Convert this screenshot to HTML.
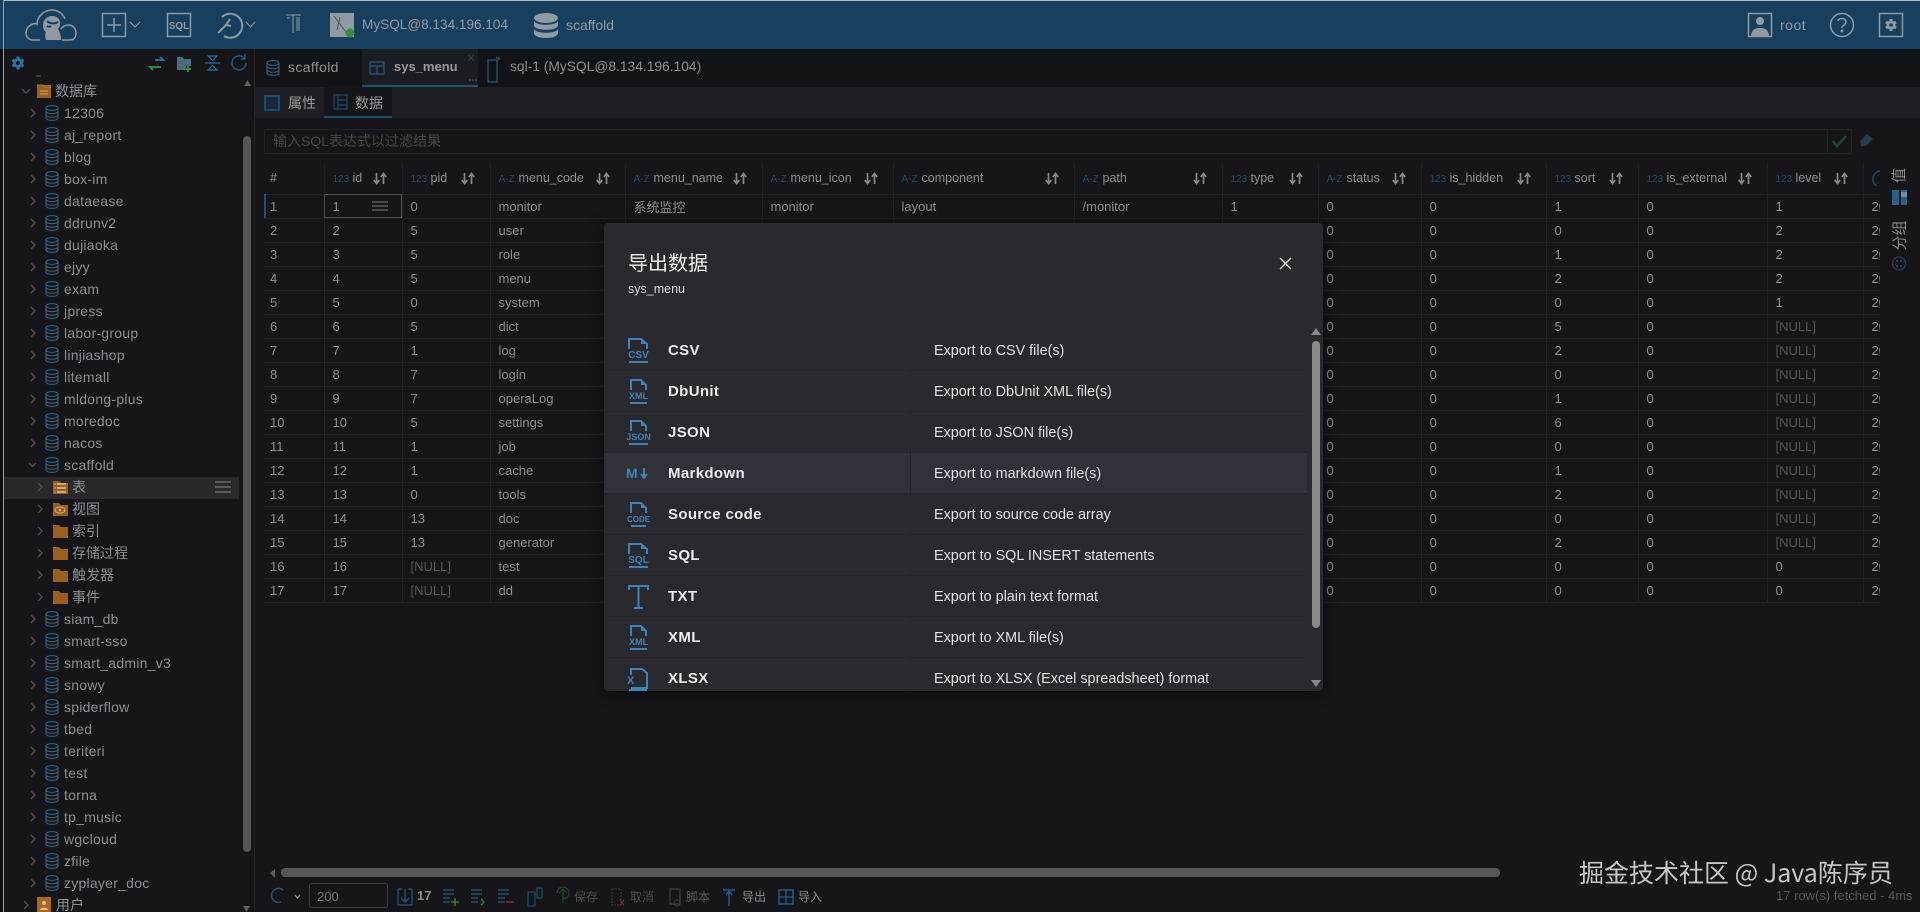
<!DOCTYPE html>
<html lang="zh"><head><meta charset="utf-8"><title>CloudBeaver</title>
<style>
html,body{margin:0;padding:0;background:#15151a;width:1920px;height:912px;overflow:hidden}
body{font-family:"Liberation Sans","Noto Sans CJK SC",sans-serif;position:relative;color:#8a8a8a}
.a{position:absolute}
.t{position:absolute;white-space:nowrap;line-height:20px;font-size:13px}
.s{position:absolute;white-space:nowrap;line-height:20px;font-size:14px;color:#8a8e92;letter-spacing:.25px;left:64px}
.c{left:72px;font-size:14px;letter-spacing:0}
table{position:absolute;left:264px;top:163px;width:1616px;border-collapse:collapse;table-layout:fixed;font-size:13px;color:#8c8c8c}
td,th{padding:0 0 0 8px;height:24px;box-sizing:border-box;border-bottom:1px solid #212226;border-right:1px solid #212226;white-space:nowrap;overflow:hidden;font-weight:normal;text-align:left;position:relative}
th{height:31px;border-right:1px solid #1e1f23;color:#8e8e8e;font-size:12.5px}
th i{font-style:normal;font-size:10px;color:#1f4a68;display:inline-block;width:20px;letter-spacing:0}
th svg{position:absolute;right:15px;top:9px}
.n{color:#555}
.h{padding-left:6px}
.mr{position:absolute;left:0;width:703px;height:41px;box-sizing:border-box;border-bottom:1px solid #25252b}
.mr b{position:absolute;left:64px;top:10px;font-size:15px;line-height:22px;color:#ececec;letter-spacing:.35px}
.mr span{position:absolute;left:330px;top:11px;font-size:14.4px;line-height:20px;color:#e2e2e2}
.mr svg{position:absolute;left:22px;top:7px}
</style></head><body>

<div class="a" style="left:0;top:0;width:1920px;height:49px;background:#18405e"></div>
<div class="a" style="left:3px;top:0;width:1917px;height:1px;background:#a9b8c2"></div>
<div class="a" style="left:3px;top:0;width:1px;height:912px;background:#9aa2a8"></div>
<div class="a" style="left:0;top:49px;width:3px;height:863px;background:#0e0f12"></div>

<div class="t" style="left:362px;top:15px;font-size:13.6px;color:#8f9aa3">MySQL@8.134.196.104</div>
<div class="t" style="left:566px;top:15px;font-size:14px;color:#8f9aa3">scaffold</div>
<div class="t" style="left:1780px;top:15px;font-size:14px;color:#8f9aa3;letter-spacing:.5px">root</div>

<div class="a" style="left:255px;top:49px;width:1665px;height:38px;background:#121317"></div>
<div class="a" style="left:362px;top:49px;width:116px;height:38px;background:#1b1d22;box-sizing:border-box;border-bottom:2px solid #23506f"></div>
<div class="t" style="left:288px;top:57px;font-size:14px;color:#8a8e92;letter-spacing:.35px">scaffold</div>
<div class="t" style="left:394px;top:57px;font-size:13px;font-weight:bold;color:#999">sys_menu</div>
<div class="t" style="left:510px;top:57px;font-size:13.8px;color:#8a8e92">sql-1 (MySQL@8.134.196.104)</div>
<div class="t" style="left:466px;top:48px;font-size:12px;color:#3a3a3c">✕</div>

<div class="a" style="left:255px;top:87px;width:1665px;height:31px;background:#1d1f24"></div>
<div class="a" style="left:324px;top:87px;width:68px;height:31px;background:#15151a;box-sizing:border-box;border-bottom:2px solid #23506f"></div>
<div class="t" style="left:288px;top:93px;font-size:14px;color:#9a9a9a">属性</div>
<div class="t" style="left:355px;top:93px;font-size:14px;color:#9a9a9a">数据</div>

<div class="a" style="left:264px;top:129px;width:1588px;height:25px;box-sizing:border-box;border:1px solid #212226;background:#15151a"></div>
<div class="a" style="left:1827px;top:130px;width:1px;height:23px;background:#212226"></div>
<div class="t" style="left:273px;top:131px;font-size:14px;color:#454648">输入SQL表达式以过滤结果</div>

<div class="a" style="left:254px;top:49px;width:1px;height:863px;background:#24252a"></div>

<table>
<colgroup><col style="width:60px"><col style="width:78px"><col style="width:88px"><col style="width:135px"><col style="width:137px"><col style="width:131px"><col style="width:181px"><col style="width:148px"><col style="width:96px"><col style="width:103px"><col style="width:125px"><col style="width:92px"><col style="width:129px"><col style="width:96px"><col style="width:17px"></colgroup>
<tr>
<th class="h">#</th>
<th><i>123</i>id<svg width="14" height="13"><use href="#sort"/></svg></th>
<th><i>123</i>pid<svg width="14" height="13"><use href="#sort"/></svg></th>
<th><i>A-Z</i>menu_code<svg width="14" height="13"><use href="#sort"/></svg></th>
<th><i>A-Z</i>menu_name<svg width="14" height="13"><use href="#sort"/></svg></th>
<th><i>A-Z</i>menu_icon<svg width="14" height="13"><use href="#sort"/></svg></th>
<th><i>A-Z</i>component<svg width="14" height="13"><use href="#sort"/></svg></th>
<th><i>A-Z</i>path<svg width="14" height="13"><use href="#sort"/></svg></th>
<th><i>123</i>type<svg width="14" height="13"><use href="#sort"/></svg></th>
<th><i>A-Z</i>status<svg width="14" height="13"><use href="#sort"/></svg></th>
<th><i>123</i>is_hidden<svg width="14" height="13"><use href="#sort"/></svg></th>
<th><i>123</i>sort<svg width="14" height="13"><use href="#sort"/></svg></th>
<th><i>123</i>is_external<svg width="14" height="13"><use href="#sort"/></svg></th>
<th><i>123</i>level<svg width="14" height="13"><use href="#sort"/></svg></th>
<th></th>
</tr>
<tr><td class="h">1</td><td>1</td><td>0</td><td>monitor</td><td>系统监控</td><td>monitor</td><td>layout</td><td>/monitor</td><td>1</td><td>0</td><td>0</td><td>1</td><td>0</td><td>1</td><td>20</td></tr>
<tr><td class="h">2</td><td>2</td><td>5</td><td>user</td><td></td><td></td><td></td><td></td><td></td><td>0</td><td>0</td><td>0</td><td>0</td><td>2</td><td>20</td></tr>
<tr><td class="h">3</td><td>3</td><td>5</td><td>role</td><td></td><td></td><td></td><td></td><td></td><td>0</td><td>0</td><td>1</td><td>0</td><td>2</td><td>20</td></tr>
<tr><td class="h">4</td><td>4</td><td>5</td><td>menu</td><td></td><td></td><td></td><td></td><td></td><td>0</td><td>0</td><td>2</td><td>0</td><td>2</td><td>20</td></tr>
<tr><td class="h">5</td><td>5</td><td>0</td><td>system</td><td></td><td></td><td></td><td></td><td></td><td>0</td><td>0</td><td>0</td><td>0</td><td>1</td><td>20</td></tr>
<tr><td class="h">6</td><td>6</td><td>5</td><td>dict</td><td></td><td></td><td></td><td></td><td></td><td>0</td><td>0</td><td>5</td><td>0</td><td class="n">[NULL]</td><td>20</td></tr>
<tr><td class="h">7</td><td>7</td><td>1</td><td>log</td><td></td><td></td><td></td><td></td><td></td><td>0</td><td>0</td><td>2</td><td>0</td><td class="n">[NULL]</td><td>20</td></tr>
<tr><td class="h">8</td><td>8</td><td>7</td><td>login</td><td></td><td></td><td></td><td></td><td></td><td>0</td><td>0</td><td>0</td><td>0</td><td class="n">[NULL]</td><td>20</td></tr>
<tr><td class="h">9</td><td>9</td><td>7</td><td>operaLog</td><td></td><td></td><td></td><td></td><td></td><td>0</td><td>0</td><td>1</td><td>0</td><td class="n">[NULL]</td><td>20</td></tr>
<tr><td class="h">10</td><td>10</td><td>5</td><td>settings</td><td></td><td></td><td></td><td></td><td></td><td>0</td><td>0</td><td>6</td><td>0</td><td class="n">[NULL]</td><td>20</td></tr>
<tr><td class="h">11</td><td>11</td><td>1</td><td>job</td><td></td><td></td><td></td><td></td><td></td><td>0</td><td>0</td><td>0</td><td>0</td><td class="n">[NULL]</td><td>20</td></tr>
<tr><td class="h">12</td><td>12</td><td>1</td><td>cache</td><td></td><td></td><td></td><td></td><td></td><td>0</td><td>0</td><td>1</td><td>0</td><td class="n">[NULL]</td><td>20</td></tr>
<tr><td class="h">13</td><td>13</td><td>0</td><td>tools</td><td></td><td></td><td></td><td></td><td></td><td>0</td><td>0</td><td>2</td><td>0</td><td class="n">[NULL]</td><td>20</td></tr>
<tr><td class="h">14</td><td>14</td><td>13</td><td>doc</td><td></td><td></td><td></td><td></td><td></td><td>0</td><td>0</td><td>0</td><td>0</td><td class="n">[NULL]</td><td>20</td></tr>
<tr><td class="h">15</td><td>15</td><td>13</td><td>generator</td><td></td><td></td><td></td><td></td><td></td><td>0</td><td>0</td><td>2</td><td>0</td><td class="n">[NULL]</td><td>20</td></tr>
<tr><td class="h">16</td><td>16</td><td class="n">[NULL]</td><td>test</td><td></td><td></td><td></td><td></td><td></td><td>0</td><td>0</td><td>0</td><td>0</td><td>0</td><td>20</td></tr>
<tr><td class="h">17</td><td>17</td><td class="n">[NULL]</td><td>dd</td><td></td><td></td><td></td><td></td><td></td><td>0</td><td>0</td><td>0</td><td>0</td><td>0</td><td>20</td></tr>
</table>
<div class="a" style="left:324px;top:194px;width:78px;height:24px;box-sizing:border-box;border:1px solid #4c4d50"></div>
<div class="a" style="left:264px;top:194px;width:2px;height:24px;background:#23506f"></div>
<div class="a" style="left:1880px;top:49px;width:40px;height:863px;background:#15151a"></div>
<div class="a" style="left:1880px;top:49px;width:40px;height:38px;background:#121317"></div>
<div class="a" style="left:1880px;top:87px;width:40px;height:31px;background:#1d1f24"></div>
<div class="a" style="left:1891px;top:167px;width:17px;height:17px;line-height:17px;font-size:15px;color:#8a8a8a;transform:rotate(-90deg);text-align:center">值</div>
<div class="a" style="left:1885px;top:227px;width:30px;height:17px;line-height:17px;font-size:15px;color:#8a8a8a;transform:rotate(-90deg);white-space:nowrap;text-align:center">分组</div>

<!-- sidebar -->
<div class="a" style="left:4px;top:477px;width:235px;height:22px;background:#29292d"></div>
<div class="s" style="left:55px;top:81px;letter-spacing:0">数据库</div>
<div class="s" style="top:103px">12306</div>
<div class="s" style="top:125px">aj_report</div>
<div class="s" style="top:147px">blog</div>
<div class="s" style="top:169px">box-im</div>
<div class="s" style="top:191px">dataease</div>
<div class="s" style="top:213px">ddrunv2</div>
<div class="s" style="top:235px">dujiaoka</div>
<div class="s" style="top:257px">ejyy</div>
<div class="s" style="top:279px">exam</div>
<div class="s" style="top:301px">jpress</div>
<div class="s" style="top:323px">labor-group</div>
<div class="s" style="top:345px">linjiashop</div>
<div class="s" style="top:367px">litemall</div>
<div class="s" style="top:389px">mldong-plus</div>
<div class="s" style="top:411px">moredoc</div>
<div class="s" style="top:433px">nacos</div>
<div class="s" style="top:455px">scaffold</div>
<div class="s c" style="top:477px">表</div>
<div class="s c" style="top:499px">视图</div>
<div class="s c" style="top:521px">索引</div>
<div class="s c" style="top:543px">存储过程</div>
<div class="s c" style="top:565px">触发器</div>
<div class="s c" style="top:587px">事件</div>
<div class="s" style="top:609px">siam_db</div>
<div class="s" style="top:631px">smart-sso</div>
<div class="s" style="top:653px">smart_admin_v3</div>
<div class="s" style="top:675px">snowy</div>
<div class="s" style="top:697px">spiderflow</div>
<div class="s" style="top:719px">tbed</div>
<div class="s" style="top:741px">teriteri</div>
<div class="s" style="top:763px">test</div>
<div class="s" style="top:785px">torna</div>
<div class="s" style="top:807px">tp_music</div>
<div class="s" style="top:829px">wgcloud</div>
<div class="s" style="top:851px">zfile</div>
<div class="s" style="top:873px">zyplayer_doc</div>
<div class="s" style="left:56px;top:895px;letter-spacing:0">用户</div>
<div class="a" style="left:243px;top:136px;width:8px;height:716px;border-radius:4px;background:#565659"></div>
<div class="a" style="left:281px;top:868px;width:1219px;height:9px;border-radius:4px;background:#565659"></div>

<!-- bottom toolbar -->
<div class="a" style="left:309px;top:883px;width:79px;height:25px;box-sizing:border-box;border:1px solid #3a3a3c;border-radius:3px"></div>
<div class="t" style="left:317px;top:887px;font-size:13px;color:#777">200</div>
<div class="t" style="left:417px;top:886px;font-size:13px;color:#888;font-weight:bold">17</div>
<div class="t" style="left:574px;top:887px;font-size:12px;color:#4d4d4d">保存</div>
<div class="t" style="left:630px;top:887px;font-size:12px;color:#4d4d4d">取消</div>
<div class="t" style="left:686px;top:887px;font-size:12px;color:#5a5a5a">脚本</div>
<div class="t" style="left:742px;top:887px;font-size:12px;color:#8a8a8a">导出</div>
<div class="t" style="left:798px;top:887px;font-size:12px;color:#8a8a8a">导入</div>
<div class="t" style="left:1579px;top:856px;font-family:'Noto Sans CJK SC','Liberation Sans',sans-serif;font-size:25px;line-height:32px;color:#c6c6c6">掘金技术社区 @ Java陈序员</div>
<div class="t" style="left:1776px;top:886px;font-size:13px;color:#565656">17 row(s) fetched - 4ms</div>

<svg class="a" style="left:0;top:0" width="1920" height="912" viewBox="0 0 1920 912" fill="none">
<defs>
<symbol id="sort" viewBox="0 0 14 13" width="14" height="13"><path d="M3.5 1v10M.8 8l2.7 3.5L6.2 8M10.500 12V2M7.800 5l2.700-3.500L13.200 5" stroke="#8a8a8a" stroke-width="1.700"/></symbol>
<symbol id="db" viewBox="0 0 14 16" width="14" height="16"><ellipse cx="7" cy="3" rx="6" ry="2.400" stroke="#29587c" stroke-width="1.300"/><path d="M1 3v10c0 1.300 2.700 2.400 6 2.400s6-1.100 6-2.400V3" stroke="#29587c" stroke-width="1.300"/><path d="M1 6.300c0 1.300 2.700 2.400 6 2.400s6-1.100 6-2.400M1 9.800c0 1.300 2.700 2.400 6 2.400s6-1.100 6-2.400" stroke="#4a5a66" stroke-width="1.100"/></symbol>
<symbol id="ch" viewBox="0 0 8 10" width="8" height="10"><path d="M2 1l4 4-4 4" stroke="#4e4e4e" stroke-width="1.400"/></symbol>
<symbol id="fo" viewBox="0 0 15 14" width="15" height="14"><path d="M0 1h6l2 2h7v11H0z" fill="#9c5e1d"/></symbol>
</defs>

<!-- top toolbar icons -->
<g stroke="#8f9aa3" stroke-width="1.500">
<path d="M40 40H33c-4 0-7-3-7-7s3-8 7-9c3-1 4 0 4 0 0-8 8-14 15-14 6 0 11 4 13 9M62 40h8c4 0 6-3 6-7 0-4-3-8-8-8-3 0-6 2-7 4"/>
<path d="M46 40c-1-3-1-6 0-8-2-1-3-4-3-7 0-5 4-9 9-9 5 0 8 3 8 7 0 3-1 5-2 6 2 3 3 7 3 11z" fill="#8f9aa3" stroke="none"/>
<path d="M47 21c3 3 8 3 11 1M47 26c1 1 3 1 4 0" stroke="#18405e" stroke-width="2"/>
<rect x="102.500" y="13.500" width="23" height="23"/><path d="M114 18v14M107 25h14"/>
<path d="M130 22l5 5 5-5" stroke-width="1"/>
<rect x="167.500" y="13.500" width="23" height="23"/>
<path d="M246 22l4.500 5 4.500-5" stroke-width="1"/>
<path d="M222 17a12 12 0 1 1 2 19M230 19l-4 6-8 8M231 26l-5-1" stroke-width="2"/>
<path d="M286 15h15M293 15v18M290 18h-3M297 17v14M299 17v14" stroke-width="1"/>
<rect x="1748.500" y="13.500" width="23" height="23"/><circle cx="1760" cy="21" r="4" fill="#8f9aa3" stroke="none"/><path d="M1751 36c0-6 4-8 9-8s9 2 9 8z" fill="#8f9aa3" stroke="none"/>
<circle cx="1842" cy="25" r="11.500"/><path d="M1838 21c0-3 8-4 8 1 0 3-4 3-4 6"/><circle cx="1842" cy="31" r=".7"/>
<rect x="1879.500" y="13.500" width="23" height="23"/>
<path d="M1891 19v12M1886 22l10 6M1896 22l-10 6" stroke-width="3"/>
<circle cx="1891" cy="25" r="4.500" fill="#8f9aa3" stroke="none"/><circle cx="1891" cy="25" r="1.800" fill="#18405e" stroke="none"/>
</g>
<text x="179" y="29" text-anchor="middle" font-family="Liberation Sans" font-size="10" font-weight="bold" fill="#8f9aa3">SQL</text>
<rect x="330" y="13" width="24" height="24" fill="#8f9aa3"/><path d="M334 16l12 16M340 17l-3 13" stroke="#4a5560"/>
<circle cx="350" cy="33" r="4.500" fill="#3c8a40"/>
<g fill="#8f9aa3"><ellipse cx="546" cy="18" rx="12" ry="5"/><path d="M534 21c2 5 22 5 24 0v5c-2 5-22 5-24 0zM534 29c2 5 22 5 24 0v4c0 3-5 5-12 5s-12-2-12-5z"/></g>

<!-- sidebar toolbar -->
<path d="M18 56.500v13M12.400 59.800l11.200 6.400M23.600 59.800l-11.200 6.400" stroke="#2b6f9f" stroke-width="3"/>
<circle cx="18" cy="63" r="5" fill="#2b6f9f"/><circle cx="18" cy="63" r="2" fill="#15151a"/>
<path d="M155 60h8l-3-3" stroke="#2b6f9f" stroke-width="2"/><path d="M161 67h-11l3 3" stroke="#2f8a3a" stroke-width="2"/>
<path d="M177 57h5l2 2h7v7h-5v4h-9z" fill="#4a6a80"/><path d="M188 66v6M185 69h6" stroke="#2f8a3a" stroke-width="2"/>
<path d="M205 63h15M208 56h9l-4.500 4.500zM208 70h9l-4.500-4.500z" stroke="#2b6f9f" stroke-width="1.200"/>
<path d="M246 63a7 7 0 1 1-2-5M245 54v5h-4" stroke="#1f5a85" stroke-width="1.500"/>
<path d="M36 76h5" stroke="#666"/>
<path d="M244 86l3.500-6 3.500 6z" fill="#5f5f5f"/>

<!-- tab icons -->
<use href="#db" x="266" y="60"/>
<path d="M370 62h14v12h-14zM370 66h14M377 66v8" stroke="#24506f" stroke-width="1.400"/>
<path d="M488 60h9v22h-9z" stroke="#24506f" stroke-width="1.400"/><path d="M496 58h3v2" stroke="#555"/>
<path d="M470 80h.01M473 80h.01M476 80h.01" stroke="#666" stroke-width="1.500" stroke-linecap="round"/>
<rect x="265" y="96" width="14" height="14" fill="#1a2a38" stroke="#1f4a68" stroke-width="2"/>
<path d="M334 95h13v14h-13zM338 95v14M338 100h9M338 105h9" stroke="#1f4a68" stroke-width="1.200"/>
<path d="M1833 141l4 5 9-10" stroke="#22442e" stroke-width="2.500"/>
<path d="M1860 141l7-7 6 5-7 7h-5z" fill="#223c50"/>

<!-- cell hamburger -->
<path d="M372 202h16M372 206h16M372 210h16" stroke="#5c5c5c" stroke-width="1.600"/>
<path d="M215 482h16M215 487h16M215 492h16" stroke="#6a6a6a" stroke-width="1.600"/>
<!-- rail -->
<rect x="1892" y="190" width="15" height="15" fill="#2b5f85"/><rect x="1899" y="190" width="2" height="15" fill="#15151a"/><rect x="1901" y="192" width="6" height="5" fill="#6f8ea5"/>
<circle cx="1899" cy="263.500" r="6.500" stroke="#2a3a48" stroke-width="1.500"/><path d="M1897 261h.01M1901 261h.01M1897 266h.01M1901 266h.01" stroke="#3a4a58" stroke-width="2" stroke-linecap="round"/>
<path d="M1880 171a8 8 0 0 0-3 15" stroke="#1f4a68" stroke-width="1.500"/>

<!-- tree icons -->
<use href="#ch" x="22" y="86" transform="rotate(90 26 91)"/>
<rect x="37" y="85" width="14" height="13" fill="#9c5e1d"/><path d="M37 85h6l1 2h7" stroke="#b97a30"/><path d="M40 91h8M40 94h8" stroke="#d0a060" stroke-width="1"/>
<g>
<use href="#db" x="45" y="105"/><use href="#ch" x="29" y="108"/>
<use href="#db" x="45" y="127"/><use href="#ch" x="29" y="130"/>
<use href="#db" x="45" y="149"/><use href="#ch" x="29" y="152"/>
<use href="#db" x="45" y="171"/><use href="#ch" x="29" y="174"/>
<use href="#db" x="45" y="193"/><use href="#ch" x="29" y="196"/>
<use href="#db" x="45" y="215"/><use href="#ch" x="29" y="218"/>
<use href="#db" x="45" y="237"/><use href="#ch" x="29" y="240"/>
<use href="#db" x="45" y="259"/><use href="#ch" x="29" y="262"/>
<use href="#db" x="45" y="281"/><use href="#ch" x="29" y="284"/>
<use href="#db" x="45" y="303"/><use href="#ch" x="29" y="306"/>
<use href="#db" x="45" y="325"/><use href="#ch" x="29" y="328"/>
<use href="#db" x="45" y="347"/><use href="#ch" x="29" y="350"/>
<use href="#db" x="45" y="369"/><use href="#ch" x="29" y="372"/>
<use href="#db" x="45" y="391"/><use href="#ch" x="29" y="394"/>
<use href="#db" x="45" y="413"/><use href="#ch" x="29" y="416"/>
<use href="#db" x="45" y="435"/><use href="#ch" x="29" y="438"/>
<use href="#db" x="45" y="457"/><path d="M29 463l3.500 3.500 3.500-3.500" stroke="#4e4e4e" stroke-width="1.400"/>
<use href="#db" x="45" y="611"/><use href="#ch" x="29" y="614"/>
<use href="#db" x="45" y="633"/><use href="#ch" x="29" y="636"/>
<use href="#db" x="45" y="655"/><use href="#ch" x="29" y="658"/>
<use href="#db" x="45" y="677"/><use href="#ch" x="29" y="680"/>
<use href="#db" x="45" y="699"/><use href="#ch" x="29" y="702"/>
<use href="#db" x="45" y="721"/><use href="#ch" x="29" y="724"/>
<use href="#db" x="45" y="743"/><use href="#ch" x="29" y="746"/>
<use href="#db" x="45" y="765"/><use href="#ch" x="29" y="768"/>
<use href="#db" x="45" y="787"/><use href="#ch" x="29" y="790"/>
<use href="#db" x="45" y="809"/><use href="#ch" x="29" y="812"/>
<use href="#db" x="45" y="831"/><use href="#ch" x="29" y="834"/>
<use href="#db" x="45" y="853"/><use href="#ch" x="29" y="856"/>
<use href="#db" x="45" y="875"/><use href="#ch" x="29" y="878"/>
<use href="#ch" x="36" y="482"/><use href="#fo" x="53" y="480"/><path d="M57 484h9M57 488h9M57 492h9M54.500 484h1M54.500 488h1M54.500 492h1" stroke="#d5c0a0" stroke-width="1.500"/>
<use href="#ch" x="36" y="504"/><use href="#fo" x="53" y="502"/><ellipse cx="60" cy="510" rx="5" ry="3" stroke="#d0b090"/><circle cx="60" cy="510" r="1.200" fill="#d0b090"/>
<use href="#ch" x="36" y="526"/><use href="#fo" x="53" y="524"/>
<use href="#ch" x="36" y="548"/><use href="#fo" x="53" y="546"/>
<use href="#ch" x="36" y="570"/><use href="#fo" x="53" y="568"/>
<use href="#ch" x="36" y="592"/><use href="#fo" x="53" y="590"/>
<use href="#ch" x="22" y="900"/><rect x="37" y="897" width="14" height="15" fill="#a8681f"/><circle cx="44" cy="903" r="2" fill="#e0c090"/><path d="M40 910c0-3 8-3 8 0z" fill="#e0c090"/>
<path d="M243 906l3.500 6 3.500-6z" fill="#5f5f5f"/>
</g>

<!-- bottom toolbar icons -->
<path d="M283 890a7 7 0 1 0-2 12" stroke="#24506f" stroke-width="1.500"/>
<path d="M295 895l2.500 3 2.500-3" stroke="#888" stroke-width="1.300"/>
<path d="M270 873l5-4v9z" fill="#5f5f5f"/>
<path d="M398 905h14M398 889h4M408 889h4M405 889v12M401 898l4 4 4-4M398 889v16M412 889v16" stroke="#24506f" stroke-width="1.400"/>
<path d="M443 890h11M443 894h11M443 898h7M443 902h7" stroke="#24506f" stroke-width="1.400"/><path d="M455 898v8M451 902h8" stroke="#2a7a34" stroke-width="1.600"/>
<path d="M471 890h11M471 894h11M471 898h7M471 902h7" stroke="#24506f" stroke-width="1.400"/><path d="M481 899l3 3-3 3" stroke="#2a7a34" stroke-width="1.300"/>
<path d="M498 890h11M498 894h11M498 898h7M498 902h7" stroke="#24506f" stroke-width="1.400"/><path d="M506 902h8" stroke="#8a2c2c" stroke-width="1.600"/>
<path d="M528 892h7v14h-7zM537 888h5v10h-5z" stroke="#1f4a68" stroke-width="1.300"/>
<path d="M563 889v14M559 893l4-4 4 4M557 893a6 6 0 0 1 12 0c0 4-3 5-6 6" stroke="#1f4a2a" stroke-width="1.200"/>
<path d="M612 889h9v16h-9z" stroke="#333a40" stroke-width="1.300" stroke-dasharray="2 1"/><path d="M620 900l4 5M624 900l-4 5" stroke="#6a2a2a" stroke-width="1.200"/>
<path d="M670 889h10v15h-10z" stroke="#3a4045" stroke-width="1.300"/><circle cx="677" cy="903" r="3" stroke="#3a4045"/>
<path d="M723 890h12M729 890v16M726 895l3-4 3 4" stroke="#245a85" stroke-width="1.500"/>
<rect x="779" y="890" width="14" height="14" stroke="#245a85" stroke-width="1.500"/><path d="M779 897h14M786 890v14" stroke="#245a85" stroke-width="1.300"/>
</svg>

<!-- modal -->
<div class="a" style="left:604px;top:223px;width:719px;height:468px;background:#29292f;border-radius:4px;overflow:hidden;box-shadow:0 2px 14px rgba(0,0,0,.5)">
  <div class="a" style="left:24px;top:29px;font-size:20px;line-height:24px;color:#ededed;white-space:nowrap">导出数据</div>
  <div class="a" style="left:24px;top:57px;font-size:12.5px;line-height:18px;color:#dcdcdc;white-space:nowrap">sys_menu</div>
  <svg class="a" style="left:675px;top:34px" width="13" height="13" viewBox="0 0 13 13"><path d="M1 1l11 11M12 1L1 12" stroke="#e8e8e8" stroke-width="1.300"/></svg>
  <div class="a" style="left:0;top:107px;width:703px;height:361px;overflow:hidden">
    <div class="mr" style="top:0"><svg width="25" height="28" viewBox="0 0 25 28" fill="none"><path d="M3 12V2h12l6 5v5" stroke="#3f82b8" stroke-width="2"/><path d="M15 2v5h6z" fill="#3f82b8"/><text x="12.500" y="21" text-anchor="middle" font-family="Liberation Sans" font-size="10" font-weight="bold" fill="#3f82b8">CSV</text><path d="M3 25h19" stroke="#3f82b8" stroke-width="2"/></svg><b>CSV</b><span>Export to CSV file(s)</span></div>
    <div class="mr" style="top:41px"><svg width="25" height="28" viewBox="0 0 25 28" fill="none"><path d="M5 12V2h10l5 5v5" stroke="#3f82b8" stroke-width="2"/><path d="M15 2v5h5z" fill="#3f82b8"/><text x="12.500" y="21" text-anchor="middle" font-family="Liberation Sans" font-size="9" font-weight="bold" fill="#3f82b8">XML</text><path d="M4 25h17" stroke="#3f82b8" stroke-width="2"/></svg><b>DbUnit</b><span>Export to DbUnit XML file(s)</span></div>
    <div class="mr" style="top:82px"><svg width="25" height="28" viewBox="0 0 25 28" fill="none"><path d="M5 12V2h10l5 5v5" stroke="#3f82b8" stroke-width="2"/><path d="M15 2v5h5z" fill="#3f82b8"/><text x="12.500" y="21" text-anchor="middle" font-family="Liberation Sans" font-size="9" font-weight="bold" fill="#3f82b8">JSON</text><path d="M3 25h19" stroke="#3f82b8" stroke-width="2"/></svg><b>JSON</b><span>Export to JSON file(s)</span></div>
    <div class="mr" style="top:123px;background:#31313a"><svg width="28" height="28" viewBox="0 0 28 28" fill="none"><text x="0" y="18" font-family="Liberation Sans" font-size="14" font-weight="bold" fill="#3f82b8">M</text><path d="M18 8v9M15 14l3 4 3-4" stroke="#3f82b8" stroke-width="2"/></svg><b>Markdown</b><span>Export to markdown file(s)</span></div>
    <div class="mr" style="top:164px"><svg width="25" height="28" viewBox="0 0 25 28" fill="none"><path d="M5 12V2h10l5 5v5" stroke="#3f82b8" stroke-width="2"/><path d="M15 2v5h5z" fill="#3f82b8"/><text x="12.500" y="21" text-anchor="middle" font-family="Liberation Sans" font-size="8" font-weight="bold" fill="#3f82b8">CODE</text><path d="M5 25h15" stroke="#3f82b8" stroke-width="2"/></svg><b>Source code</b><span>Export to source code array</span></div>
    <div class="mr" style="top:205px"><svg width="25" height="28" viewBox="0 0 25 28" fill="none"><path d="M3 12V2h12l6 5v5" stroke="#3f82b8" stroke-width="2"/><path d="M15 2v5h6z" fill="#3f82b8"/><text x="12.500" y="21" text-anchor="middle" font-family="Liberation Sans" font-size="10" font-weight="bold" fill="#3f82b8">SQL</text><path d="M3 25h19" stroke="#3f82b8" stroke-width="2"/></svg><b>SQL</b><span>Export to SQL INSERT statements</span></div>
    <div class="mr" style="top:246px"><svg width="25" height="28" viewBox="0 0 25 28" fill="none"><path d="M3 7V3h19v4M12.500 3v21M8 25h9" stroke="#3f82b8" stroke-width="2"/></svg><b>TXT</b><span>Export to plain text format</span></div>
    <div class="mr" style="top:287px"><svg width="25" height="28" viewBox="0 0 25 28" fill="none"><path d="M5 12V2h10l5 5v5" stroke="#3f82b8" stroke-width="2"/><path d="M15 2v5h5z" fill="#3f82b8"/><text x="12.500" y="21" text-anchor="middle" font-family="Liberation Sans" font-size="9" font-weight="bold" fill="#3f82b8">XML</text><path d="M4 25h17" stroke="#3f82b8" stroke-width="2"/></svg><b>XML</b><span>Export to XML file(s)</span></div>
    <div class="mr" style="top:328px"><svg width="25" height="28" viewBox="0 0 25 28" fill="none"><path d="M5 10V4h11l5 4v15H5" stroke="#3f82b8" stroke-width="2"/><text x="1" y="19" font-family="Liberation Sans" font-size="11" font-weight="bold" fill="#3f82b8">X</text><path d="M3 25h18" stroke="#3f82b8" stroke-width="2"/></svg><b>XLSX</b><span>Export to XLSX (Excel spreadsheet) format</span></div>
    <div class="a" style="left:306px;top:0;width:1px;height:361px;background:#25252b"></div>
  </div>
  <div class="a" style="left:708px;top:118px;width:8px;height:287px;border-radius:4px;background:#8a8a8c"></div>
  <svg class="a" style="left:707px;top:105px" width="10" height="7"><path d="M5 0l5 7H0z" fill="#8a8a8c"/></svg>
  <svg class="a" style="left:707px;top:457px" width="10" height="7"><path d="M5 7L0 0h10z" fill="#8a8a8c"/></svg>
</div>
</body></html>
